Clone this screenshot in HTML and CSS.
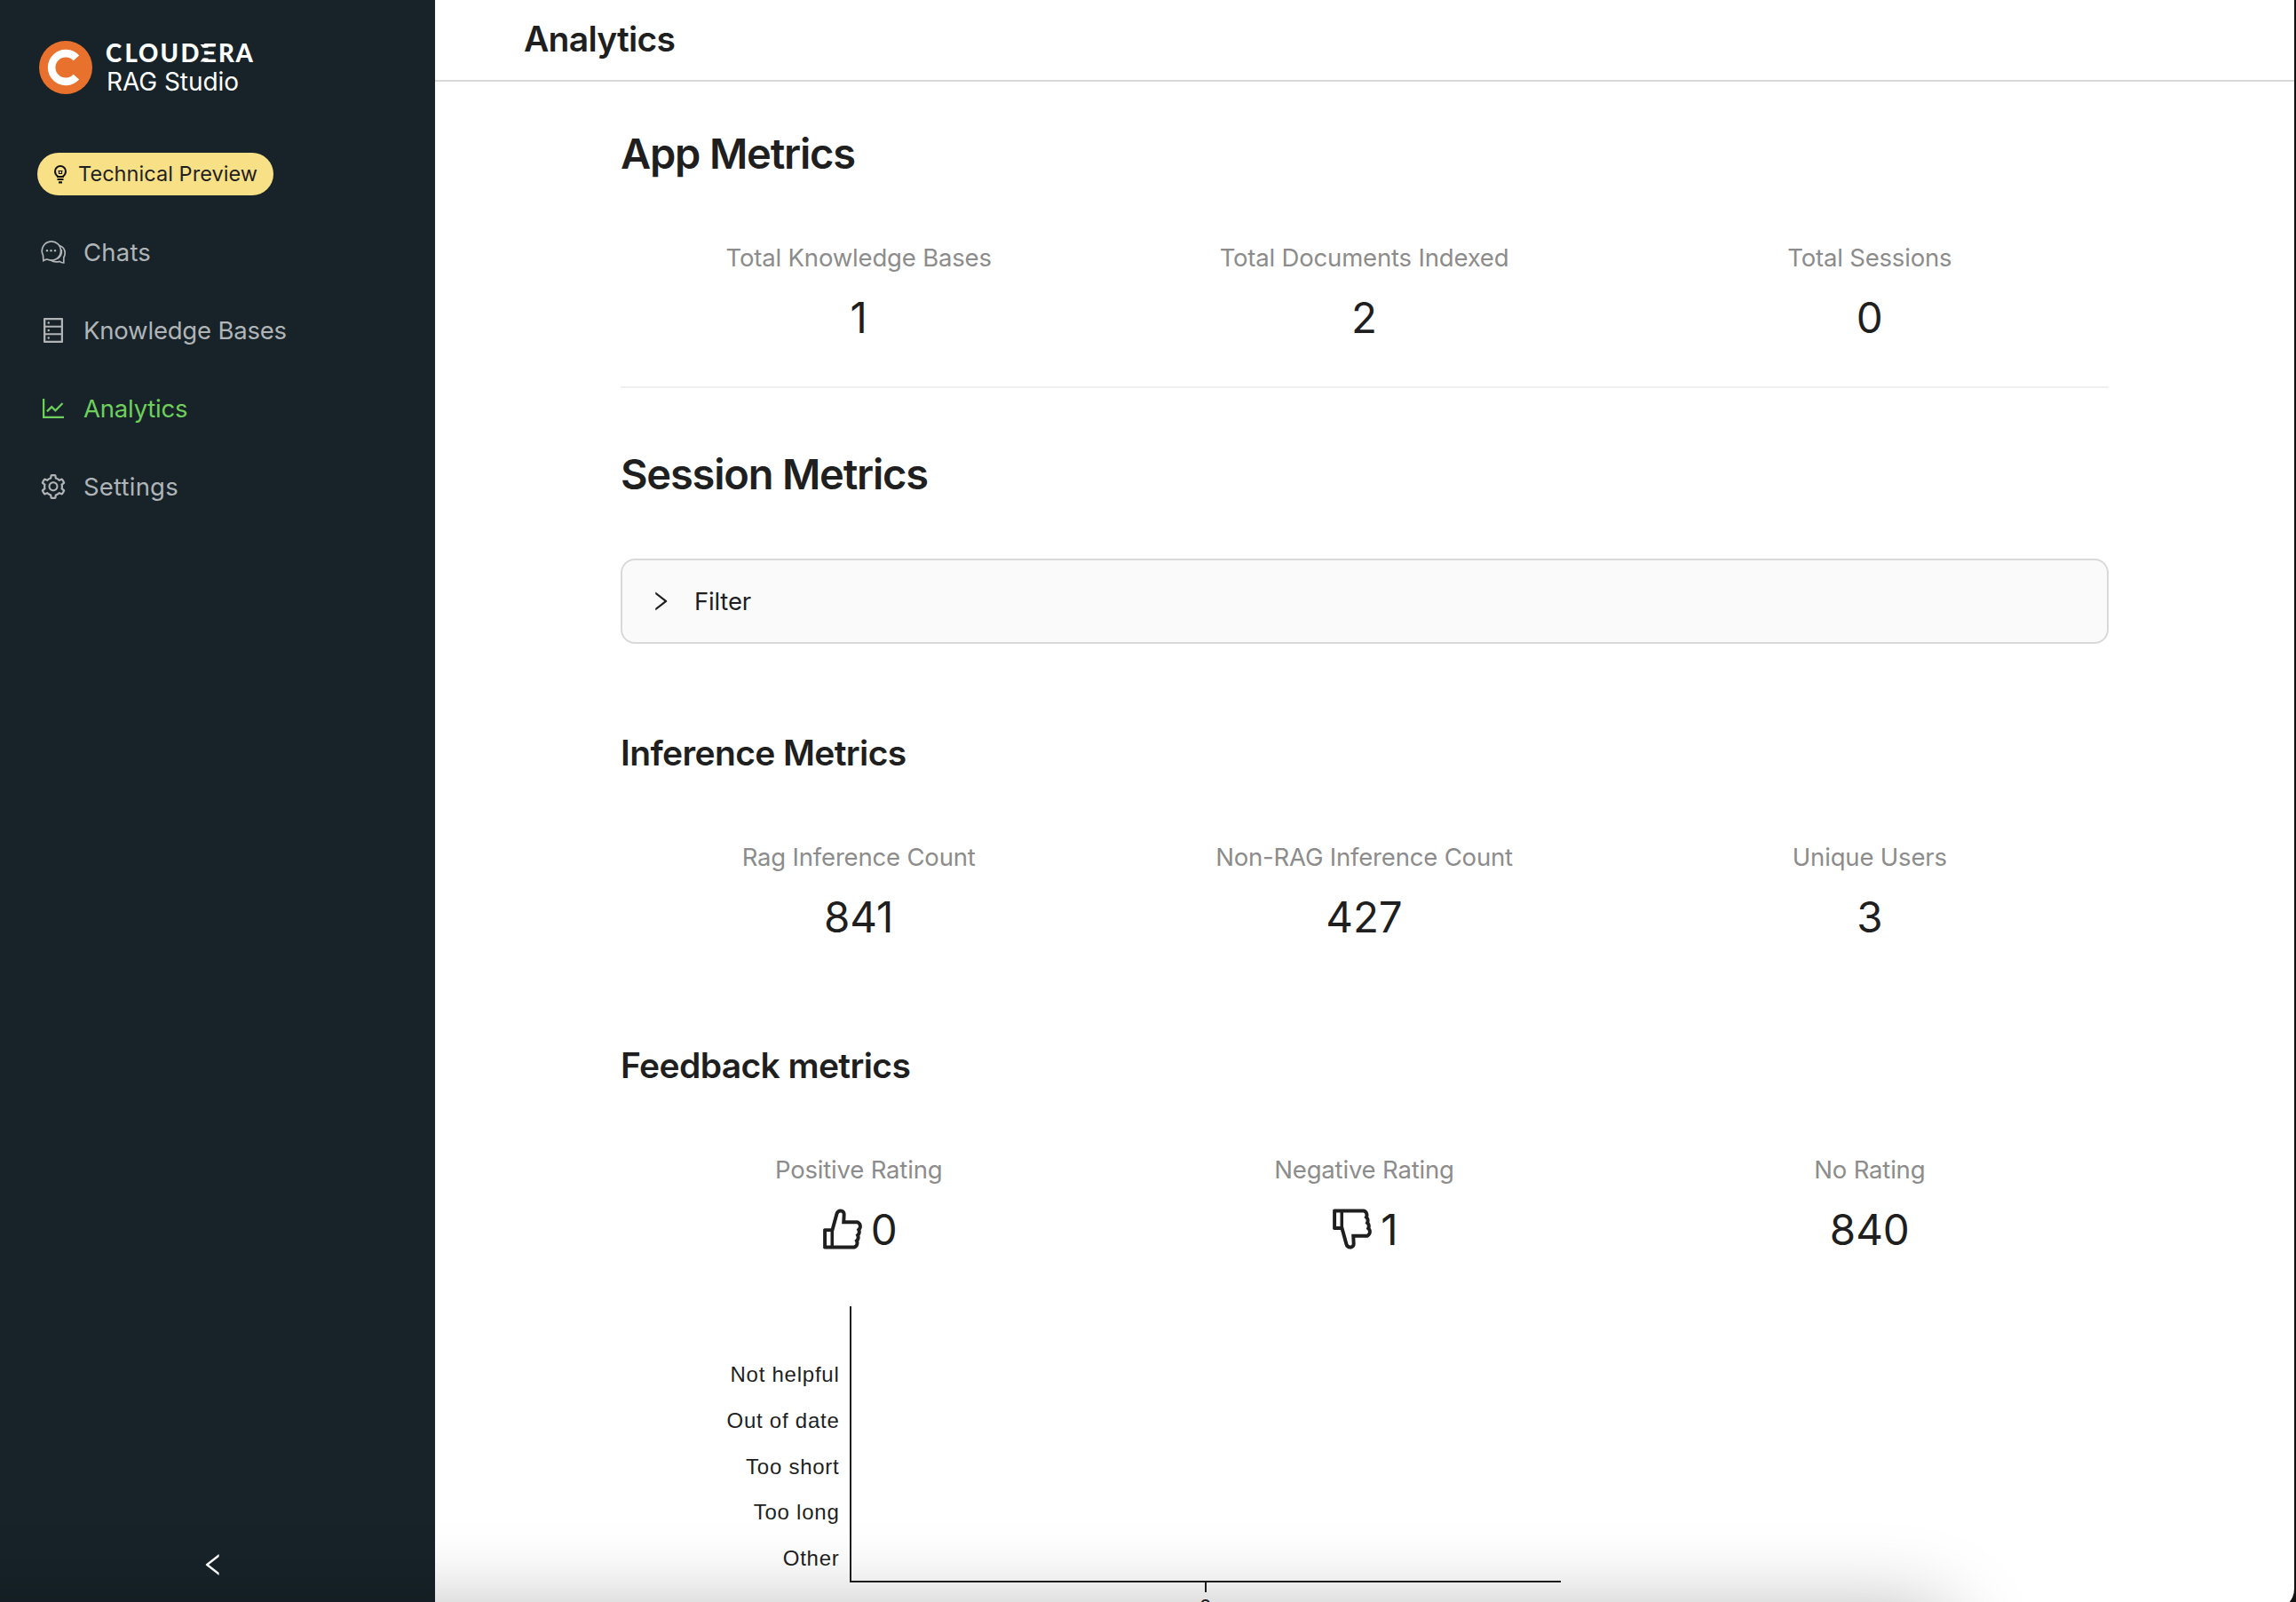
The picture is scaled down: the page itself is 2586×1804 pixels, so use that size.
FILE: index.html
```html
<!DOCTYPE html>
<html lang="en">
<head>
<meta charset="utf-8">
<title>Analytics</title>
<link rel="stylesheet" href="styles.css">
</head>
<body>
<div class="window">
  <aside class="sidebar">
    <svg class="logo" width="260" height="64" viewBox="0 0 260 64" role="img" aria-label="Cloudera RAG Studio">
      <circle cx="30" cy="32" r="30" fill="#e8722d"/>
      <path d="M41.9 21.4A15.9 15.9 0 1 0 41.9 42.6" fill="none" stroke="#fff" stroke-width="8.6"/>
      <text class="brand" x="75 96.500 112 136.500 159.500 184 202 221.500" y="25.600">CLOUDERA</text>
      <path class="cut" d="M183 9.800h10v3.800h-10zM183 17.500h10v4h-10z"/>
      <path d="M181.500 6h6v3.800h-3zM184.500 21.500h3v4.100h-6z" fill="#fff"/>
      <text class="product" x="76" y="58" textLength="149">RAG Studio</text>
    </svg>
    <div class="pill">
      <svg class="bulb" width="16" height="22" viewBox="0 0 16 22" fill="none" stroke="#111" stroke-width="2">
        <path d="M5 13.500C3 12 2 10 2 8a6 6 0 0 1 12 0c0 2-1 4-3 5.500V14H5z"/>
        <path d="M5.500 7.500h5M6.500 7.500v3h3v-3" stroke-width="1.200"/>
        <path d="M4.500 17h7M6 20.300h4" stroke-width="2.200"/>
      </svg>
      <span>Technical Preview</span>
    </div>
    <nav class="menu">
      <a class="item"><svg width="32" height="32" viewBox="0 0 32 32" fill="none" stroke="currentColor" stroke-width="1.700"><path d="M4.900 25.600l-.4-6.200A10.600 10.600 0 1 1 9.800 24.300c-1.600-.6-3.300.4-4.900 1.300z"/><path d="M23 8.500c4 1.300 6.200 5 6.200 8.500 0 2-.700 3.800-1.400 5v6c-2 0-3.500-.500-4.800-1.600-3.500 1-7 .600-10-1.400"/><path d="M20.500 23.500c3.200-2 5.300-5.500 4.800-10.500"/><g fill="currentColor" stroke="none"><circle cx="9" cy="14.300" r="1.200"/><circle cx="13.500" cy="14.300" r="1.200"/><circle cx="18" cy="14.300" r="1.200"/></g></svg><span class="wide">Chats</span></a>
      <a class="item"><svg width="32" height="32" viewBox="0 0 1024 1024" fill="currentColor"><path d="M832 64H192c-17.700 0-32 14.300-32 32v832c0 17.700 14.300 32 32 32h640c17.700 0 32-14.300 32-32V96c0-17.700-14.300-32-32-32zm-600 72h560v208H232V136zm560 480H232V408h560v208zm0 272H232V680h560v208zM304 240a40 40 0 1080 0 40 40 0 10-80 0zm0 272a40 40 0 1080 0 40 40 0 10-80 0zm0 272a40 40 0 1080 0 40 40 0 10-80 0z"/></svg><span>Knowledge Bases</span></a>
      <a class="item active"><svg width="32" height="32" viewBox="0 0 1024 1024" fill="currentColor"><path d="M888 792H200V168c0-4.400-3.600-8-8-8h-56c-4.400 0-8 3.600-8 8v688c0 4.400 3.600 8 8 8h752c4.400 0 8-3.600 8-8v-56c0-4.400-3.600-8-8-8zM305.800 637.700c3.100 3.100 8.100 3.100 11.300 0l138.300-137.600L583 628.500c3.100 3.100 8.200 3.100 11.300 0l275.400-275.300c3.100-3.100 3.100-8.200 0-11.300l-39.600-39.600c-3.100-3.100-8.200-3.100-11.300 0l-230 229.900L461.400 404c-3.100-3.100-8.200-3.100-11.300 0L266.300 586.700c-3.100 3.100-3.100 8.200 0 11.300l39.500 39.700z"/></svg><span>Analytics</span></a>
      <a class="item"><svg width="32" height="32" viewBox="0 0 1024 1024" fill="currentColor"><path d="M924.8 625.7l-65.500-56c3.100-19 4.700-38.400 4.700-57.800s-1.600-38.800-4.700-57.800l65.500-56a32.030 32.030 0 009.300-35.200l-.9-2.600a443.740 443.740 0 00-79.700-137.900l-1.800-2.100a32.120 32.120 0 00-35.100-9.500l-81.300 28.900c-30-24.600-63.500-44-99.700-57.600l-15.700-85a32.050 32.050 0 00-25.800-25.700l-2.700-.5c-52.100-9.400-106.900-9.400-159 0l-2.700.5a32.050 32.050 0 00-25.800 25.700l-15.800 85.400a351.860 351.860 0 00-99 57.400l-81.900-29.100a32 32 0 00-35.100 9.500l-1.800 2.100a446.020 446.020 0 00-79.700 137.900l-.9 2.600c-4.500 12.500-.8 26.500 9.300 35.200l66.300 56.600c-3.100 18.800-4.600 38-4.600 57.100 0 19.200 1.500 38.400 4.600 57.100L99 625.500a32.030 32.030 0 00-9.300 35.200l.9 2.600c18.100 50.400 44.900 96.900 79.700 137.900l1.800 2.100a32.120 32.120 0 0035.100 9.500l81.900-29.100c29.800 24.500 63.100 43.900 99 57.400l15.800 85.400a32.050 32.050 0 0025.800 25.700l2.700.5a449.400 449.400 0 00159 0l2.700-.5a32.050 32.050 0 0025.800-25.700l15.700-85a350 350 0 0099.700-57.600l81.300 28.900a32 32 0 0035.100-9.500l1.800-2.100c34.800-41.100 61.600-87.500 79.700-137.900l.9-2.600c4.500-12.300.8-26.300-9.300-35zM788.300 465.900c2.500 15.100 3.800 30.600 3.800 46.100s-1.300 31-3.800 46.100l-6.600 40.100 74.700 63.900a370.030 370.030 0 01-42.600 73.600L721 702.800l-31.400 25.800c-23.900 19.600-50.500 35-79.300 45.800l-38.100 14.300-17.900 97a377.500 377.500 0 01-85 0l-17.900-97.200-37.800-14.500c-28.500-10.800-55-26.200-78.700-45.700l-31.400-25.900-93.400 33.200c-17-22.900-31.200-47.600-42.600-73.600l75.500-64.500-6.500-40c-2.400-14.900-3.700-30.300-3.700-45.500 0-15.300 1.200-30.600 3.700-45.500l6.500-40-75.500-64.500c11.300-26.100 25.600-50.700 42.600-73.600l93.400 33.200 31.400-25.900c23.700-19.500 50.200-34.900 78.700-45.700l37.900-14.300 17.900-97.200c28.100-3.200 56.800-3.200 85 0l17.900 97 38.100 14.300c28.700 10.800 55.400 26.200 79.300 45.800l31.400 25.800 92.800-32.900c17 22.900 31.200 47.600 42.600 73.600L781.800 426l6.500 39.900zM512 326c-97.200 0-176 78.800-176 176s78.800 176 176 176 176-78.800 176-176-78.800-176-176-176zm79.200 255.200A111.600 111.600 0 01512 614c-29.900 0-58-11.700-79.200-32.800A111.600 111.600 0 01400 502c0-29.900 11.700-58 32.800-79.200C454 401.600 482.100 390 512 390c29.900 0 58 11.600 79.200 32.800A111.600 111.600 0 01624 502c0 29.900-11.700 58-32.800 79.200z"/></svg><span class="wide">Settings</span></a>
    </nav>
    <div class="collapse"><svg width="32" height="32" viewBox="0 0 1024 1024" fill="#fff"><path d="M724 218.300V141c0-6.700-7.700-10.400-12.900-6.300L260.300 486.800a31.860 31.860 0 000 50.300l450.800 352.100c5.300 4.100 12.900.4 12.900-6.300v-77.300c0-4.900-2.300-9.600-6.100-12.600l-360-281 360-281.100c3.800-3 6.100-7.700 6.100-12.600z"/></svg></div>
  </aside>
  <main class="main">
    <header class="topbar"><h1>Analytics</h1></header>
    <div class="content">
      <section class="app-metrics">
        <h2>App Metrics</h2>
        <div class="stats">
          <div class="stat"><div class="label">Total Knowledge Bases</div><div class="value">1</div></div>
          <div class="stat"><div class="label">Total Documents Indexed</div><div class="value">2</div></div>
          <div class="stat"><div class="label">Total Sessions</div><div class="value">0</div></div>
        </div>
      </section>
      <section class="session-metrics">
        <h2>Session Metrics</h2>
        <div class="filter">
          <svg width="28" height="28" viewBox="0 0 1024 1024" fill="#1f1f1f"><path d="M765.700 486.800L314.900 134.700A7.970 7.970 0 00302 141v77.300c0 4.900 2.300 9.600 6.100 12.600l360 281.100-360 281.100c-3.900 3-6.100 7.700-6.100 12.600V883c0 6.700 7.700 10.400 12.900 6.300l450.800-352.100a31.960 31.960 0 000-50.400z"/></svg>
          <span>Filter</span>
        </div>
      </section>
      <section class="sub">
        <h3>Inference Metrics</h3>
        <div class="stats">
          <div class="stat"><div class="label">Rag Inference Count</div><div class="value">841</div></div>
          <div class="stat"><div class="label">Non-RAG Inference Count</div><div class="value">427</div></div>
          <div class="stat"><div class="label">Unique Users</div><div class="value">3</div></div>
        </div>
      </section>
      <section class="sub">
        <h3>Feedback metrics</h3>
        <div class="stats">
          <div class="stat"><div class="label">Positive Rating</div><div class="value rated"><svg width="56" height="56" viewBox="0 0 1024 1024" fill="currentColor"><path d="M885.900 533.700c16.800-22.200 26.100-49.400 26.100-77.700 0-44.900-25.100-87.400-65.500-111.100a67.670 67.670 0 00-34.300-9.300H572.400l6-122.900c1.400-29.700-9.100-57.900-29.500-79.400A106.620 106.620 0 00471 99.900c-52 0-98 35-111.800 85.100l-85.900 311H144c-17.700 0-32 14.300-32 32v364c0 17.700 14.300 32 32 32h601.300c9.200 0 18.200-1.800 26.500-5.400 47.600-20.300 78.300-66.800 78.300-118.400 0-12.600-1.800-25-5.400-37 16.800-22.200 26.100-49.400 26.100-77.700 0-12.600-1.800-25-5.400-37 16.800-22.200 26.100-49.400 26.100-77.700-.2-12.600-2-25.100-5.600-37.100zM184 852V568h81v284h-81zm636.400-353l-21.900 19 13.900 25.400a56.200 56.200 0 016.900 27.300c0 16.500-7.200 32.200-19.600 43l-21.900 19 13.900 25.400a56.200 56.200 0 016.900 27.300c0 16.500-7.200 32.200-19.600 43l-21.900 19 13.900 25.400a56.200 56.200 0 016.900 27.300c0 22.400-13.200 42.600-33.600 51.800H329V564.800l99.500-360.500a44.100 44.100 0 0142.200-32.300c7.600 0 15.100 2.200 21.100 6.700 9.900 7.400 15.200 18.600 14.600 30.500l-9.600 198.400h314.400C829 418.500 840 436.900 840 456c0 16.500-7.200 32.100-19.600 43z"/></svg><span>0</span></div></div>
          <div class="stat"><div class="label">Negative Rating</div><div class="value rated"><svg width="56" height="56" viewBox="0 0 1024 1024" fill="currentColor"><path d="M885.900 490.300c3.600-12 5.400-24.400 5.400-37 0-28.300-9.300-55.500-26.100-77.700 3.600-12 5.400-24.400 5.400-37 0-28.300-9.300-55.500-26.100-77.700 3.600-12 5.400-24.400 5.400-37 0-51.600-30.700-98.100-78.300-118.400a66.100 66.100 0 00-26.500-5.400H144c-17.700 0-32 14.300-32 32v364c0 17.700 14.300 32 32 32h129.300l85.800 310.800C372.900 889 418.900 924 470.900 924c29.700 0 57.400-11.800 77.900-33.400 20.500-21.500 31-49.700 29.500-79.400l-6-122.900h239.900c12.100 0 23.900-3.200 34.300-9.300 40.400-23.500 65.500-66.100 65.500-111 0-28.300-9.300-55.500-26.100-77.700zM184 456V172h81v284h-81zm627.200 160.400H496.800l9.600 198.400c.6 11.900-4.700 23.100-14.600 30.500-6.100 4.500-13.600 6.800-21.100 6.700a44.280 44.280 0 01-42.200-32.300L329 459.200V172h415.400a56.850 56.850 0 0133.600 51.800c0 9.700-2.300 18.900-6.900 27.300l-13.900 25.400 21.900 19a56.760 56.760 0 0119.600 43c0 9.700-2.300 18.900-6.900 27.300l-13.900 25.400 21.900 19a56.760 56.760 0 0119.600 43c0 9.700-2.300 18.900-6.900 27.300l-14 25.500 21.900 19a56.760 56.760 0 0119.600 43c0 19.100-11 37.500-28.800 48.400z"/></svg><span>1</span></div></div>
          <div class="stat"><div class="label">No Rating</div><div class="value">840</div></div>
        </div>
      </section>
      <svg class="chart" width="1200" height="340" viewBox="0 0 1200 340">
        <g class="ticks" text-anchor="end">
          <text x="246.500" y="85">Not helpful</text>
          <text x="246.500" y="137">Out of date</text>
          <text x="246.500" y="189">Too short</text>
          <text x="246.500" y="240">Too long</text>
          <text x="246.500" y="292">Other</text>
        </g>
        <path d="M259 0V311M258 310H1059M659 310V322" fill="none" stroke="#1f1f1f" stroke-width="2"/>
        <text class="ticks" x="659" y="347" text-anchor="middle">0</text>
      </svg>
    </div>
  </main>
  <div class="dock-shadow"></div>
</div>
</body>
</html>
```
FILE: styles.css
```css
* { box-sizing: border-box; }

body {
  margin: 0;
  height: 1804px;
  overflow: hidden;
  background: #111;
  color: #1f1f1f;
  font-family: Inter, "Liberation Sans", sans-serif;
}

h1, h2, h3 { margin: 0; font-weight: 600; }
svg { display: block; flex: none; }

.window {
  position: relative;
  display: flex;
  width: 2584px;
  height: 1813px;
  overflow: hidden;
  background: #fff;
  border-bottom-right-radius: 24px;
}

.sidebar {
  display: flex;
  flex-direction: column;
  width: 490px;
  padding: 44px 42px 35px;
  background: #172329;
}

.logo { margin-left: 2px; }
.brand { font: 900 27.5px Lato, sans-serif; fill: #fff; }
.cut { fill: #172329; }
.product { font: 400 28px Inter, sans-serif; fill: #fff; }

.pill {
  display: flex;
  align-items: center;
  gap: 12px;
  width: 266px;
  height: 48px;
  margin-top: 64px;
  padding: 0 0 1px 18px;
  border-radius: 24px;
  background: #f8e086;
  font-size: 23.5px;
  letter-spacing: 0.05px;
}

.menu { margin-top: 20px; }

.item {
  display: flex;
  align-items: center;
  gap: 18px;
  height: 88px;
  padding-left: 2px;
  color: #b0b4b6;
  font-size: 27.5px;
  letter-spacing: -0.2px;
}

.wide { letter-spacing: 0.2px; }

.active { color: #6fcf5c; }

.collapse {
  display: flex;
  justify-content: center;
  margin-top: auto;
  padding-right: 10px;
}

.main { flex: 1; min-width: 0; }

.topbar {
  height: 92px;
  padding-left: 100px;
  border-bottom: 2px solid #d9d9db;
}

h1 { font-size: 39px; line-height: 88px; letter-spacing: -0.75px; }

.content { width: 1885px; padding: 51px 0 0 209px; }

h2 { font-size: 47px; line-height: 60px; letter-spacing: -1.2px; }
h3 { font-size: 39px; line-height: 48px; letter-spacing: -0.62px; }

.stats {
  display: grid;
  grid-template-columns: repeat(3, 1fr);
  margin: 0 -16px;
}

.stat {
  display: flex;
  flex-direction: column;
  align-items: center;
  gap: 15px;
  padding: 0 1px 1px 0;
}

.label {
  color: #8c8c8c;
  font-size: 27.5px;
  line-height: 44px;
  letter-spacing: -0.18px;
}

.value {
  display: flex;
  align-items: center;
  gap: 4px;
  height: 60px;
  font-size: 47.5px;
}

.rated { margin-right: 3px; }

.app-metrics {
  display: grid;
  gap: 65px;
  padding-bottom: 47px;
  border-bottom: 2px solid #f0f0f0;
}

.session-metrics { display: grid; gap: 65px; padding-top: 67px; }

.filter {
  display: flex;
  align-items: center;
  gap: 24px;
  height: 96px;
  padding-left: 29px;
  border: 2px solid #d9d9d9;
  border-radius: 16px;
  background: #fafafa;
  font-size: 27.5px;
  letter-spacing: -0.2px;
}

.sub { display: grid; gap: 71px; padding-top: 99px; }
.sub + .sub { padding-top: 113px; }

.chart { margin-top: 56px; overflow: visible; }
.ticks { font: 24px "Liberation Sans", sans-serif; letter-spacing: 0.75px; fill: #1f1f1f; }

/* soft shade along the lower edge of the window */
.dock-shadow {
  position: absolute;
  left: -150px;
  top: 1810px;
  width: 2350px;
  height: 200px;
  border-radius: 40px;
  box-shadow: 0 0 90px rgba(0, 0, 0, 0.27);
}
```
